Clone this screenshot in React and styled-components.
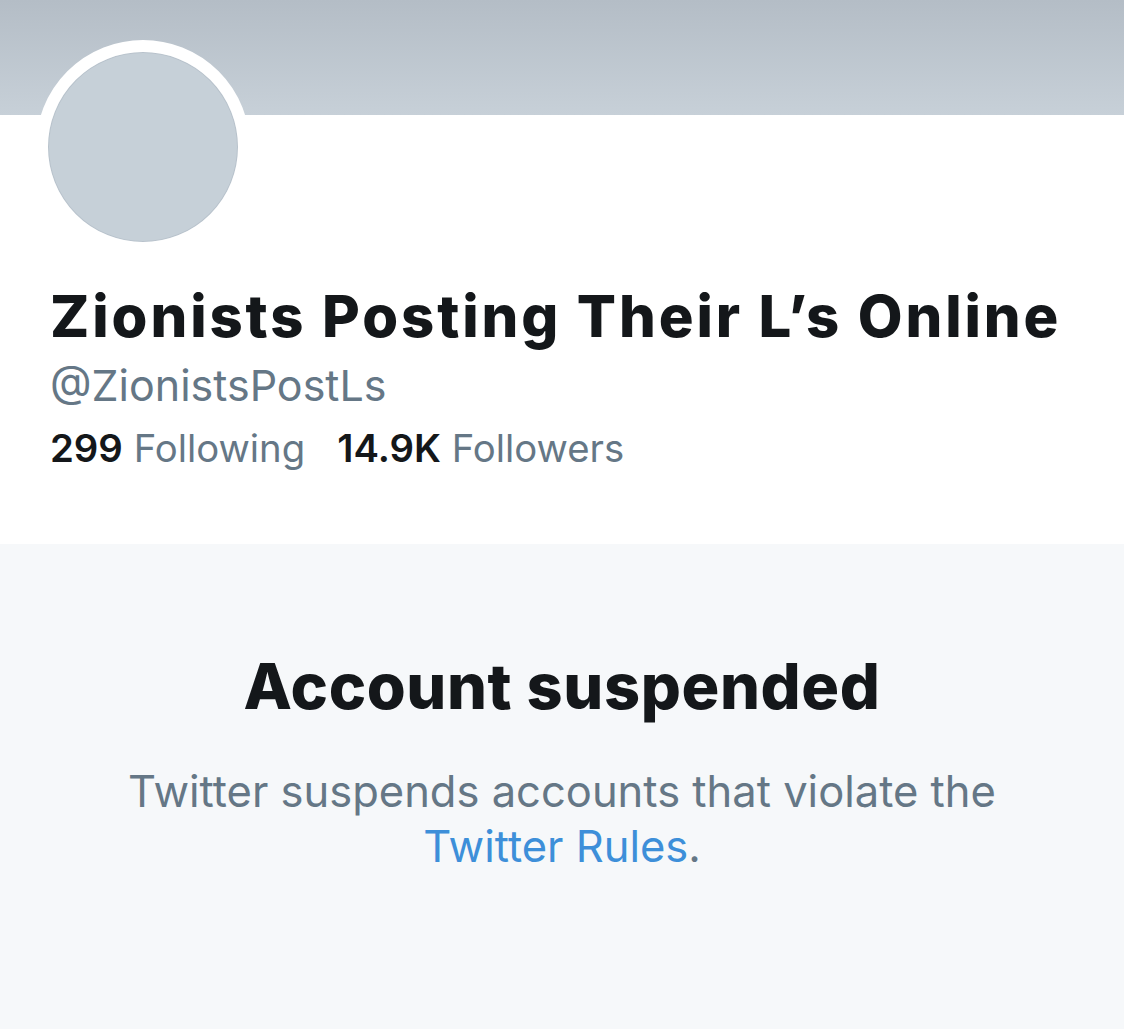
import React from 'react'
import styled, { createGlobalStyle } from 'styled-components'

const GlobalStyle = createGlobalStyle`
  html, body {
    margin: 0;
    padding: 0;
    background: #f6f8fa;
  }
  body {
    font-family: Inter, "Noto Sans", "Liberation Sans", sans-serif;
    -webkit-font-smoothing: antialiased;
  }
`

const Page = styled.div`
  width: 1124px;
  min-height: 1029px;
  display: flex;
  flex-direction: column;
  background: #f6f8fa;
`

const Banner = styled.div`
  height: 115px;
  background: linear-gradient(180deg, #b4bdc6 0%, #c7d0d8 100%);
`

const ProfileCard = styled.section`
  background: #fff;
  height: 429px;
  padding: 0 50px;
  box-sizing: border-box;
  display: flex;
  flex-direction: column;
`

const Avatar = styled.div`
  width: 190px;
  height: 190px;
  margin: -75px 0 0 -14px;
  border: 12px solid #fff;
  border-radius: 50%;
  background: #c6d0d8;
  box-shadow: inset 0 0 0 1px rgba(120, 135, 150, 0.18);
`

const Name = styled.h1`
  margin: 28px 0 0;
  font-size: 58px;
  font-weight: 800;
  letter-spacing: 2.9px;
  line-height: 68px;
  color: #14171a;
  white-space: nowrap;
`

const Handle = styled.div`
  margin-top: 9px;
  font-size: 43px;
  line-height: 52px;
  color: #657786;
`

const Stats = styled.div`
  margin-top: 14px;
  display: flex;
  gap: 32px;
  font-size: 38.3px;
  line-height: 46px;
`

const Stat = styled.span`
  color: #657786;
  b {
    color: #14171a;
    font-weight: 600;
  }
`

const Notice = styled.section`
  flex: 1;
  display: flex;
  flex-direction: column;
  align-items: center;
  text-align: center;
  padding-top: 104px;
`

const Title = styled.h2`
  margin: 0;
  font-size: 63px;
  font-weight: 800;
  letter-spacing: 0.6px;
  line-height: 76px;
  color: #14171a;
`

const Message = styled.p`
  margin: 40px 0 0;
  font-size: 43.5px;
  line-height: 55px;
  color: #657786;
`

const RulesLink = styled.a`
  color: #3d8fd9;
  text-decoration: none;
`

export default function App() {
  return (
    <Page>
      <GlobalStyle />
      <Banner />
      <ProfileCard>
        <Avatar />
        <Name>Zionists Posting Their L’s Online</Name>
        <Handle>@ZionistsPostLs</Handle>
        <Stats>
          <Stat><b>299</b> Following</Stat>
          <Stat><b>14.9K</b> Followers</Stat>
        </Stats>
      </ProfileCard>
      <Notice>
        <Title>Account suspended</Title>
        <Message>
          Twitter suspends accounts that violate the
          <br />
          <RulesLink href="#">Twitter Rules</RulesLink>.
        </Message>
      </Notice>
    </Page>
  )
}
